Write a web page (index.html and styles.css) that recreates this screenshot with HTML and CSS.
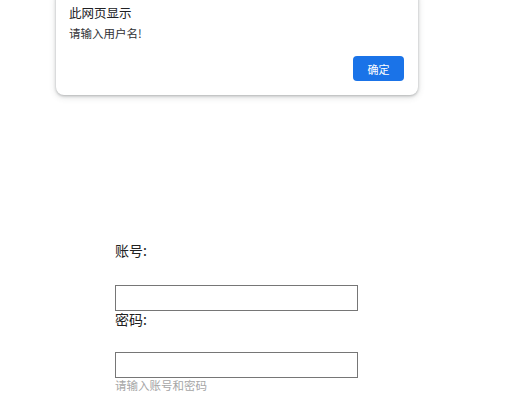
FILE: index.html
```html
<!DOCTYPE html>
<html lang="zh-CN">
<head>
<meta charset="utf-8">
<title>登录</title>
<link rel="stylesheet" href="styles.css">
</head>
<body>
<div class="form">
  <div class="label label-first">账号:</div>
  <input class="field" type="text">
  <div class="label">密码:</div>
  <input class="field" type="password">
  <div class="hint">请输入账号和密码</div>
</div>
<div class="dialog">
  <div class="dialog-title">此网页显示</div>
  <div class="dialog-msg">请输入用户名!</div>
  <div class="dialog-actions">
    <button class="btn-ok" type="button">确定</button>
  </div>
</div>
</body>
</html>
```
FILE: styles.css
```css
html, body {
  background: #ffffff;
}
body {
  margin: 8px;
  font-family: "Noto Sans CJK SC", "Noto Sans", sans-serif;
  color: #202124;
}
.form {
  display: flex;
  flex-direction: column;
  align-items: flex-start;
  padding-top: 234px;
  padding-left: 107px;
}
.label {
  font-size: 14px;
  line-height: 16px;
  color: #222;
  margin-bottom: 25px;
}
.label-first {
  margin-bottom: 27px;
}
.field {
  box-sizing: border-box;
  width: 243px;
  height: 26px;
  margin: 0;
  padding: 0 2px;
  border: 1px solid #767676;
  border-radius: 0;
  background: #fff;
  font-family: inherit;
  font-size: 13px;
}
.hint {
  font-size: 11.5px;
  line-height: 15px;
  color: #a6a6a6;
}
.dialog {
  position: absolute;
  left: 56px;
  top: -10px;
  width: 362px;
  box-sizing: border-box;
  padding: 14px 14px 14px 13px;
  background: #fff;
  border-radius: 8px;
  box-shadow: 0 1px 3px rgba(60, 64, 67, 0.35), 0 2px 6px 1px rgba(60, 64, 67, 0.12);
}
.dialog-title {
  font-size: 12.5px;
  line-height: 18px;
  color: #202124;
}
.dialog-msg {
  margin-top: 3px;
  font-size: 11.5px;
  line-height: 17px;
  color: #303134;
}
.dialog-actions {
  display: flex;
  justify-content: flex-end;
  margin-top: 14px;
}
.btn-ok {
  width: 51px;
  height: 25px;
  padding: 0;
  border: none;
  border-radius: 4px;
  background: #1a73e8;
  color: #fff;
  font-family: inherit;
  font-size: 11px;
}
```
